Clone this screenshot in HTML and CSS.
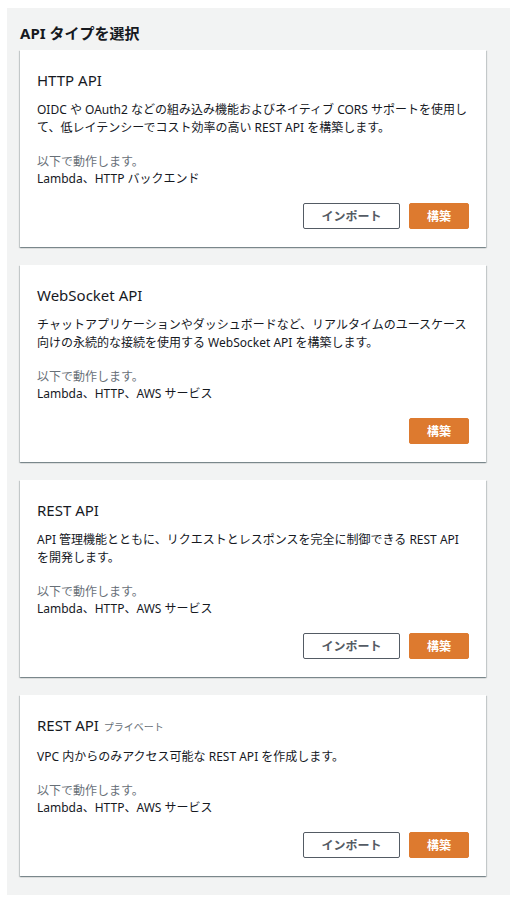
FILE: index.html
```html
<!DOCTYPE html>
<html lang="ja">
<head>
<meta charset="utf-8">
<link rel="stylesheet" href="styles.css">
</head>
<body>
<div class="panel">
  <h2 class="heading">API タイプを選択</h2>
  <div class="cards">
    <div class="card">
      <div class="title">HTTP API</div>
      <p class="desc">OIDC や OAuth2 などの組み込み機能およびネイティブ CORS サポートを使用して、低レイテンシーでコスト効率の高い REST API を構築します。</p>
      <div class="works">
        <div class="works-label">以下で動作します。</div>
        <div class="works-list">Lambda、HTTP バックエンド</div>
      </div>
      <div class="actions">
        <button class="btn btn-normal">インポート</button>
        <button class="btn btn-primary">構築</button>
      </div>
    </div>
    <div class="card">
      <div class="title">WebSocket API</div>
      <p class="desc">チャットアプリケーションやダッシュボードなど、リアルタイムのユースケース向けの永続的な接続を使用する WebSocket API を構築します。</p>
      <div class="works">
        <div class="works-label">以下で動作します。</div>
        <div class="works-list">Lambda、HTTP、AWS サービス</div>
      </div>
      <div class="actions">
        <button class="btn btn-primary">構築</button>
      </div>
    </div>
    <div class="card">
      <div class="title">REST API</div>
      <p class="desc">API 管理機能とともに、リクエストとレスポンスを完全に制御できる REST API を開発します。</p>
      <div class="works">
        <div class="works-label">以下で動作します。</div>
        <div class="works-list">Lambda、HTTP、AWS サービス</div>
      </div>
      <div class="actions">
        <button class="btn btn-normal">インポート</button>
        <button class="btn btn-primary">構築</button>
      </div>
    </div>
    <div class="card">
      <div class="title">REST API <span class="tag">プライベート</span></div>
      <p class="desc">VPC 内からのみアクセス可能な REST API を作成します。</p>
      <div class="works">
        <div class="works-label">以下で動作します。</div>
        <div class="works-list">Lambda、HTTP、AWS サービス</div>
      </div>
      <div class="actions">
        <button class="btn btn-normal">インポート</button>
        <button class="btn btn-primary">構築</button>
      </div>
    </div>
  </div>
</div>
</body>
</html>
```

FILE: styles.css
```css
html, body {
  margin: 0;
  padding: 0;
  background: #ffffff;
}
body {
  padding: 8px 9px 6px 7px;
  font-family: "Noto Sans", "Noto Sans CJK JP", sans-serif;
  color: #16191f;
}
.panel {
  background: #f2f3f3;
  padding: 14px 24px 19px 13px;
}
.heading {
  margin: 0 0 6px 0;
  font-size: 15px;
  line-height: 22px;
  font-weight: 700;
  color: #16191f;
}
.cards {
  display: flex;
  flex-direction: column;
  gap: 18px;
}
.card {
  background: #ffffff;
  padding: 20px 17px 18px 17px;
  box-shadow: 0 1px 1px 0 rgba(0, 28, 36, 0.3), 1px 1px 1px 0 rgba(0, 28, 36, 0.15), -1px 1px 1px 0 rgba(0, 28, 36, 0.15);
}
.title {
  font-size: 15px;
  line-height: 20px;
  color: #16191f;
}
.tag {
  font-size: 10px;
  color: #687078;
  margin-left: 1px;
}
.desc {
  margin: 11px 0 0 0;
  font-size: 12px;
  line-height: 18px;
}
.works {
  margin-top: 16px;
  font-size: 12px;
  line-height: 17px;
}
.works-label {
  color: #687078;
}
.works-list {
  color: #16191f;
}
.actions {
  display: flex;
  justify-content: flex-end;
  gap: 9px;
  margin-top: 16px;
}
.btn {
  height: 26px;
  border-radius: 2px;
  font-family: "Noto Sans", "Noto Sans CJK JP", sans-serif;
  font-size: 12px;
  font-weight: 700;
  padding: 0;
  cursor: pointer;
}
.btn-normal {
  width: 97px;
  background: #ffffff;
  border: 1px solid #545b64;
  color: #545b64;
}
.btn-primary {
  width: 60px;
  background: #dd7a2f;
  border: 1px solid #dd7a2f;
  color: #ffffff;
}
```
